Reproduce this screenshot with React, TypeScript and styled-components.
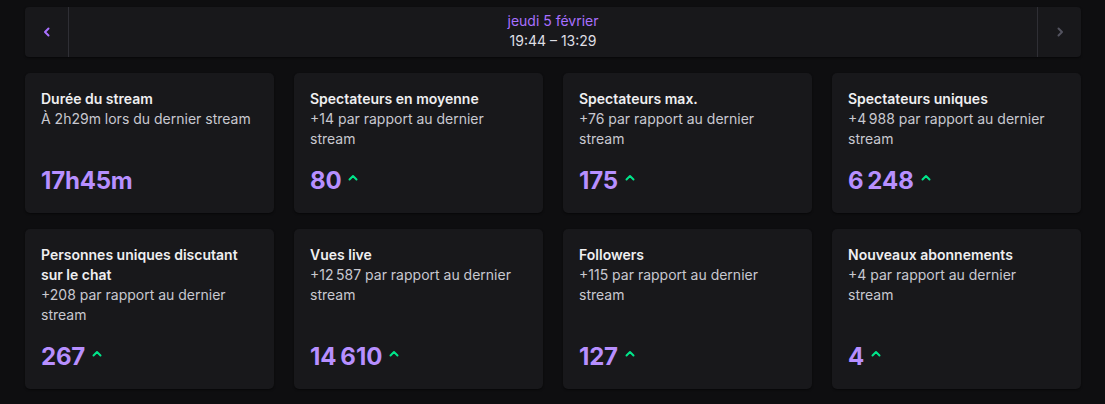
import React from "react";
import styled, { createGlobalStyle } from "styled-components";

const GlobalStyle = createGlobalStyle`
  html, body {
    margin: 0;
    padding: 0;
    background: #0e0e10;
  }
  body {
    font-family: Inter, "Noto Sans", sans-serif;
    color: #efeff1;
  }
  * { box-sizing: border-box; }
`;

const Page = styled.div`
  width: 1105px;
  height: 404px;
  padding: 7px 24px 0 25px;
  display: flex;
  flex-direction: column;
  gap: 16px;
  background: #0e0e10;
`;

const DateBar = styled.div`
  display: flex;
  height: 50px;
  background: #18181b;
  border-radius: 4px;
  box-shadow: 0 1px 2px rgba(0, 0, 0, 0.5);
`;

const NavButton = styled.button<{ $side: "left" | "right"; $disabled?: boolean }>`
  width: 44px;
  flex: none;
  display: flex;
  align-items: center;
  justify-content: center;
  background: transparent;
  border: none;
  padding: 0;
  ${(p) => (p.$side === "left" ? "border-right: 1px solid #2f2f35;" : "border-left: 1px solid #2f2f35;")}
  color: ${(p) => (p.$disabled ? "#53535f" : "#a970ff")};
  cursor: pointer;
`;

const DateCenter = styled.div`
  flex: 1;
  display: flex;
  flex-direction: column;
  align-items: center;
  justify-content: center;
  font-size: 14px;
  line-height: 20px;
  padding-bottom: 2px;
`;

const DateLabel = styled.div`
  color: #a970ff;
`;

const TimeRange = styled.div`
  color: #dedee3;
`;

const Grid = styled.div`
  display: grid;
  grid-template-columns: repeat(4, 1fr);
  column-gap: 20px;
  row-gap: 16px;
`;

const Card = styled.div`
  background: #18181b;
  border-radius: 5px;
  padding: 16px;
  display: flex;
  flex-direction: column;
  box-shadow: 0 1px 2px rgba(0, 0, 0, 0.5);
`;

const CardTitle = styled.div`
  font-size: 14px;
  line-height: 20px;
  font-weight: 600;
  color: #efeff1;
`;

const CardDesc = styled.div`
  font-size: 14px;
  line-height: 20px;
  color: #c8c8d0;
`;

const ValueRow = styled.div`
  margin-top: auto;
  padding-top: 16px;
  display: flex;
  align-items: center;
  gap: 7px;
`;

const Value = styled.div`
  font-size: 24px;
  line-height: 32px;
  font-weight: 700;
  color: #b78fff;
  letter-spacing: -0.2px;
`;

const Trend = styled.span`
  display: flex;
  color: #00e58a;
  margin-top: -7px;
`;

const Chevron = ({ dir }: { dir: "left" | "right" }) => (
  <svg width="8" height="10" viewBox="0 0 8 10" fill="none">
    <path
      d={dir === "left" ? "M5.5 1.5 L2 5 L5.5 8.5" : "M2.5 1.5 L6 5 L2.5 8.5"}
      stroke="currentColor"
      strokeWidth="2"
      strokeLinecap="round"
      strokeLinejoin="round"
    />
  </svg>
);

const UpCaret = () => (
  <svg width="10" height="7" viewBox="0 0 10 7" fill="none">
    <path d="M1.5 5.5 L5 2 L8.5 5.5" stroke="currentColor" strokeWidth="2" strokeLinecap="round" strokeLinejoin="round" />
  </svg>
);

type Stat = { title: string; desc: string; value: string; up?: boolean };

const stats: Stat[] = [
  { title: "Durée du stream", desc: "À 2h29m lors du dernier stream", value: "17h45m" },
  { title: "Spectateurs en moyenne", desc: "+14 par rapport au dernier stream", value: "80", up: true },
  { title: "Spectateurs max.", desc: "+76 par rapport au dernier stream", value: "175", up: true },
  { title: "Spectateurs uniques", desc: "+4\u202F988 par rapport au dernier stream", value: "6\u202F248", up: true },
  { title: "Personnes uniques discutant sur le chat", desc: "+208 par rapport au dernier stream", value: "267", up: true },
  { title: "Vues live", desc: "+12\u202F587 par rapport au dernier stream", value: "14\u202F610", up: true },
  { title: "Followers", desc: "+115 par rapport au dernier stream", value: "127", up: true },
  { title: "Nouveaux abonnements", desc: "+4 par rapport au dernier stream", value: "4", up: true },
];

export default function App() {
  return (
    <>
      <GlobalStyle />
      <Page>
        <DateBar>
          <NavButton $side="left" aria-label="Précédent">
            <Chevron dir="left" />
          </NavButton>
          <DateCenter>
            <DateLabel>jeudi 5 février</DateLabel>
            <TimeRange>19:44 – 13:29</TimeRange>
          </DateCenter>
          <NavButton $side="right" $disabled aria-label="Suivant">
            <Chevron dir="right" />
          </NavButton>
        </DateBar>
        <Grid>
          {stats.map((s) => (
            <Card key={s.title}>
              <CardTitle>{s.title}</CardTitle>
              <CardDesc>{s.desc}</CardDesc>
              <ValueRow>
                <Value>{s.value}</Value>
                {s.up && (
                  <Trend>
                    <UpCaret />
                  </Trend>
                )}
              </ValueRow>
            </Card>
          ))}
        </Grid>
      </Page>
    </>
  );
}
